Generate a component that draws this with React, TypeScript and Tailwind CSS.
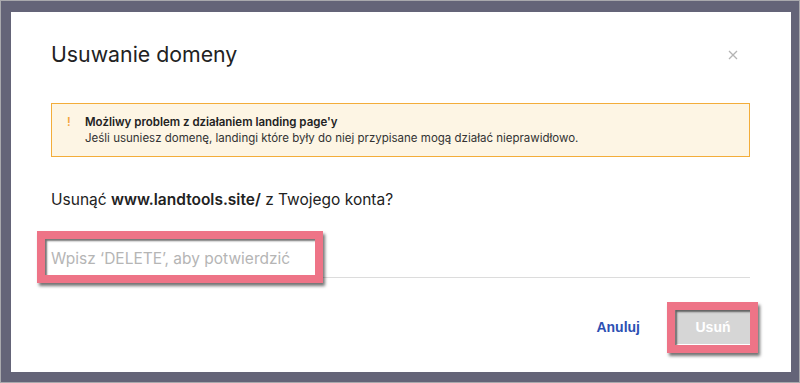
const inter = { fontFamily: "Inter, 'Noto Sans', sans-serif" };

const Highlight = ({ className }: { className: string }) => (
  <div
    className={`pointer-events-none absolute border-[8px] border-[#ee7487] shadow-[2px_3px_3px_rgba(0,0,0,0.55),inset_2px_2px_2px_rgba(0,0,0,0.55)] ${className}`}
  />
);

export default function App() {
  return (
    <div
      className="h-[383px] w-[800px] border border-[#a9a9ad] bg-[#646478] pb-[10px] pl-[10px] pr-[8px] pt-[11px]"
      style={inter}
    >
      <div className="h-[360px] w-[780px] bg-white pl-[40px] pr-[41px] pt-[30px]">
        <div className="flex items-start justify-between">
          <h1 className="text-[21.3px] leading-[25px] text-[#222]">Usuwanie domeny</h1>
          <button className="mr-[12px] mt-[8px] text-[#b4b4b4]">
            <svg width="10" height="10" viewBox="0 0 10 10">
              <path d="M1 1L9 9M9 1L1 9" stroke="currentColor" strokeWidth="1.3" />
            </svg>
          </button>
        </div>

        <div className="mt-[36px] flex border border-[#f3ad3a] bg-[#fdf5e4] py-[10px] pl-[15px] text-[11.5px] leading-[16px] text-[#333]">
          <span className="w-[18px] font-semibold text-[#f3a33a]">!</span>
          <div>
            <p className="font-semibold text-[#222]">Możliwy problem z działaniem landing page'y</p>
            <p>Jeśli usuniesz domenę, landingi które były do niej przypisane mogą działać nieprawidłowo.</p>
          </div>
        </div>

        <p className="mt-[31px] text-[15.5px] leading-[24px] text-[#222]">
          Usunąć <b className="font-semibold">www.landtools.site/</b> z Twojego konta?
        </p>

        <div className="relative mt-[28px]">
          <input
            className="h-[38px] w-full border-b border-[#dcdcdc] text-[15.5px] text-[#333] outline-none placeholder:text-[#b5b5b5]"
            placeholder="Wpisz ‘DELETE’, aby potwierdzić"
          />
          <Highlight className="-left-[14px] -top-[9px] h-[52px] w-[286px]" />
        </div>

        <div className="mt-[32px] flex items-center justify-end gap-[36px]">
          <button
            className="text-[14px] font-bold text-[#2d50b3]"
            style={{ fontFamily: "'Liberation Sans', Arial, sans-serif" }}
          >
            Anuluj
          </button>
          <div className="relative">
            <button
              className="h-[34px] w-[74px] bg-[#d6d6d6] text-[14px] font-bold text-white"
              style={{ fontFamily: "'Liberation Sans', Arial, sans-serif" }}
            >
              Usuń
            </button>
            <Highlight className="-bottom-[9px] -left-[9px] -right-[8px] -top-[8px]" />
          </div>
        </div>
      </div>
    </div>
  );
}
